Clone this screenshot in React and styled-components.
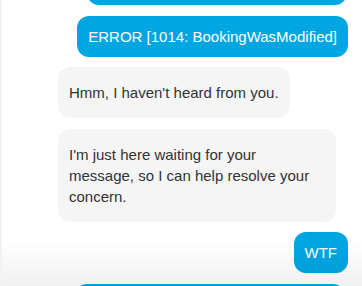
import styled, { createGlobalStyle } from 'styled-components';

const GlobalStyle = createGlobalStyle`
  html, body {
    margin: 0;
    padding: 0;
    background: #ffffff;
  }
  body {
    font-family: "Liberation Sans", Arial, sans-serif;
  }
`;

const Window = styled.div`
  position: relative;
  width: 362px;
  height: 286px;
  overflow: hidden;
  box-sizing: border-box;
  border-left: 2px solid #f2f2f2;
  background: #ffffff;
`;

const Thread = styled.div`
  display: flex;
  flex-direction: column;
  gap: 10.5px;
  margin-top: -57px;
  padding: 0 14px 0 56px;
`;

const Bubble = styled.div`
  box-sizing: border-box;
  max-width: 278px;
  line-height: 21px;
  font-size: 15px;
  border-radius: 12px;
  align-self: ${(p) => (p.$mine ? 'flex-end' : 'flex-start')};
  background: ${(p) => (p.$mine ? '#00a6e2' : '#f5f5f5')};
  color: ${(p) => (p.$mine ? '#ffffff' : '#333333')};
  padding: ${(p) => (p.$mine ? '10px 11px' : '15px 11px')};
  width: ${(p) => p.$width || 'auto'};
  margin-right: ${(p) => p.$inset || '0'};
`;

const Fade = styled.div`
  position: absolute;
  left: 0;
  right: 0;
  bottom: 0;
  height: 44px;
  pointer-events: none;
  background: linear-gradient(to bottom, rgba(0, 0, 0, 0), rgba(0, 0, 0, 0.06));
`;

const messages = [
  { mine: true, text: 'Hi, I need to change the date of my booking please', width: '260px', inset: '1px' },
  { mine: true, text: 'ERROR [1014: BookingWasModified]' },
  { mine: false, text: "Hmm, I haven't heard from you." },
  {
    mine: false,
    text: "I'm just here waiting for your message, so I can help resolve your concern.",
  },
  { mine: true, text: 'WTF' },
  { mine: true, text: 'Please check it again now', width: '270px', inset: '3px' },
];

export default function App() {
  return (
    <>
      <GlobalStyle />
      <Window>
        <Thread>
          {messages.map((m, i) => (
            <Bubble key={i} $mine={m.mine} $width={m.width} $inset={m.inset}>
              {m.text}
            </Bubble>
          ))}
        </Thread>
        <Fade />
      </Window>
    </>
  );
}
